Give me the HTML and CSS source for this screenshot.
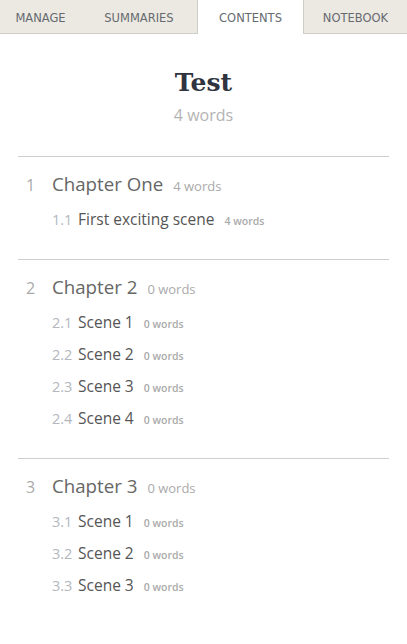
FILE: index.html
```html
<!DOCTYPE html>
<html lang="en">
<head>
  <meta charset="UTF-8">
  <meta name="viewport" content="width=device-width, initial-scale=1">
  <title>Contents</title>
  <link rel="stylesheet" href="styles.css">
</head>
<body>

<div class="tabs">
  <div class="tab">MANAGE</div>
  <div class="tab">SUMMARIES</div>
  <div class="tab active">CONTENTS</div>
  <div class="tab">NOTEBOOK</div>
</div>

<div class="contents">
  <div class="book-head">
    <h1>Test</h1>
    <div class="book-count">4 words</div>
  </div>

  <div class="chapter">
    <div class="chapter-row">
      <span class="ch-num">1</span>
      <span class="ch-title">Chapter One</span>
      <span class="ch-count">4 words</span>
    </div>
    <div class="scene-row">
      <span class="sc-num">1.1</span>
      <span class="sc-title">First exciting scene</span>
      <span class="sc-count">4 words</span>
    </div>
  </div>

  <div class="chapter">
    <div class="chapter-row">
      <span class="ch-num">2</span>
      <span class="ch-title">Chapter 2</span>
      <span class="ch-count">0 words</span>
    </div>
    <div class="scene-row">
      <span class="sc-num">2.1</span>
      <span class="sc-title">Scene 1</span>
      <span class="sc-count">0 words</span>
    </div>
    <div class="scene-row">
      <span class="sc-num">2.2</span>
      <span class="sc-title">Scene 2</span>
      <span class="sc-count">0 words</span>
    </div>
    <div class="scene-row">
      <span class="sc-num">2.3</span>
      <span class="sc-title">Scene 3</span>
      <span class="sc-count">0 words</span>
    </div>
    <div class="scene-row">
      <span class="sc-num">2.4</span>
      <span class="sc-title">Scene 4</span>
      <span class="sc-count">0 words</span>
    </div>
  </div>

  <div class="chapter">
    <div class="chapter-row">
      <span class="ch-num">3</span>
      <span class="ch-title">Chapter 3</span>
      <span class="ch-count">0 words</span>
    </div>
    <div class="scene-row">
      <span class="sc-num">3.1</span>
      <span class="sc-title">Scene 1</span>
      <span class="sc-count">0 words</span>
    </div>
    <div class="scene-row">
      <span class="sc-num">3.2</span>
      <span class="sc-title">Scene 2</span>
      <span class="sc-count">0 words</span>
    </div>
    <div class="scene-row">
      <span class="sc-num">3.3</span>
      <span class="sc-title">Scene 3</span>
      <span class="sc-count">0 words</span>
    </div>
  </div>
</div>

</body>
</html>
```

FILE: styles.css
```css
body {
  margin: 0;
  background: #fff;
  font-family: "Open Sans", Arial, sans-serif;
}
.tabs {
  display: grid;
  grid-template-columns: 81px 116px 107px 1fr;
  height: 33px;
  background: #ece9e2;
  border-bottom: 1px solid #cfcdc8;
}
.tab {
  display: flex;
  align-items: center;
  justify-content: center;
  font-family: "DejaVu Sans", Tahoma, sans-serif;
  font-size: 11.5px;
  color: #666a70;
  padding-top: 2px;
}
.tab.active {
  background: #fff;
  border-left: 1px solid #cfcdc8;
  border-right: 1px solid #cfcdc8;
  margin-bottom: -1px;
  position: relative;
}
.contents {
  padding: 0 18px;
}
.book-head {
  text-align: center;
  padding-top: 33px;
  padding-bottom: 30px;
}
.book-head h1 {
  margin: 0;
  font-family: "DejaVu Serif", Georgia, serif;
  font-size: 25px;
  line-height: 32px;
  color: #2f3440;
}
.book-count {
  font-size: 16px;
  color: #b3b3b3;
  line-height: 22px;
  margin-top: 5px;
}
.chapter {
  border-top: 1px solid #cfcfcf;
  padding: 14px 0 24px;
}
.chapter-row {
  display: flex;
  align-items: baseline;
  height: 26px;
}
.ch-num {
  width: 34px;
  padding-left: 8px;
  box-sizing: border-box;
  font-size: 16px;
  color: #aaa;
}
.ch-title {
  font-size: 18.7px;
  color: #666;
  margin-right: 10px;
}
.ch-count {
  font-size: 13px;
  color: #aaa;
}
.scene-row {
  display: flex;
  align-items: baseline;
  height: 32px;
  padding-left: 34px;
  line-height: 32px;
}
.chapter-row + .scene-row {
  margin-top: 6px;
}
.sc-num {
  width: 26px;
  font-size: 14.5px;
  color: #b3b7be;
}
.sc-title {
  font-size: 15.5px;
  color: #555;
  margin-right: 10px;
}
.sc-count {
  font-size: 10.5px;
  color: #aaa;
  font-weight: 600;
}
```
